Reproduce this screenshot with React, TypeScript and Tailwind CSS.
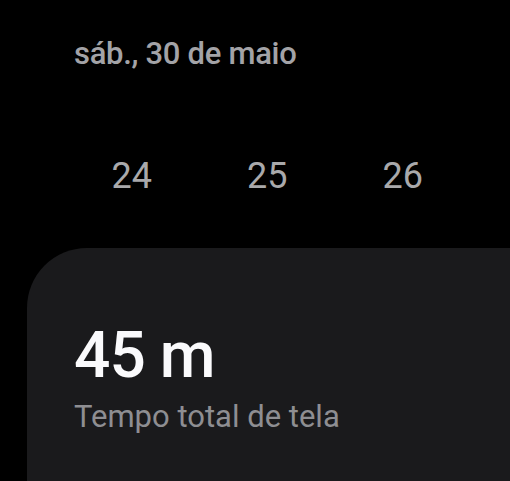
export default function App() {
  const days = ["24", "25", "26"];
  return (
    <div className="h-[481px] w-[510px] overflow-hidden bg-black font-['Roboto',sans-serif]">
      <div className="pl-[74px] pt-[35px] text-[31px] font-medium leading-[38px] tracking-[-0.3px] text-[#a3a3a7]">
        sáb., 30 de maio
      </div>
      <div className="mt-[82px] flex pl-[64px]">
        {days.map((d) => (
          <div
            key={d}
            className="w-[135.5px] text-center text-[36px] leading-[42px] text-[#a9a9ab]"
          >
            {d}
          </div>
        ))}
      </div>
      <div className="ml-[27px] mt-[51px] h-[300px] rounded-tl-[60px] bg-[#1a1a1c] pl-[47px] pt-[72px]">
        <div className="text-[64px] font-medium leading-[72px] tracking-[-1px] text-[#fafafc]">
          45 m
        </div>
        <div className="mt-[6px] text-[31px] leading-[38px] text-[#8e8e92]">
          Tempo total de tela
        </div>
      </div>
    </div>
  );
}
